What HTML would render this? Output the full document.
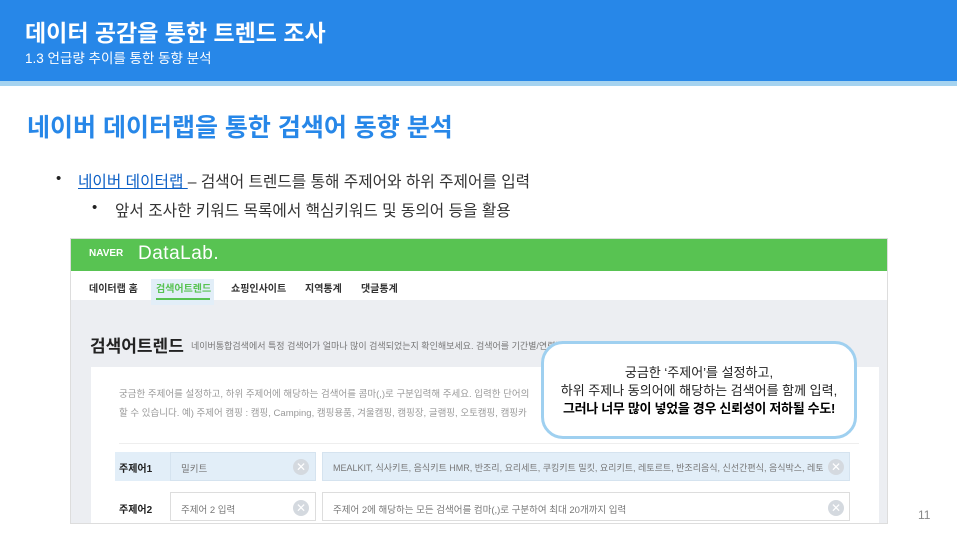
<!DOCTYPE html>
<html><head><meta charset="utf-8"><style>
*{margin:0;padding:0;box-sizing:border-box}
body{width:957px;height:534px;background:#fff;position:relative;overflow:hidden;font-family:"Liberation Sans","Noto Sans CJK KR",sans-serif}
.a{position:absolute;white-space:nowrap}
.x{position:absolute;width:16px;height:16px;border-radius:50%;background:#d4d9df;color:#fff;font-size:12px;line-height:16px;text-align:center}
</style></head><body>
<div class="a" style="left:0;top:0;width:957px;height:81px;background:#2787e8"></div>
<div class="a" style="left:0;top:81px;width:957px;height:5px;background:#a5d3f0"></div>
<div class="a" style="left:25px;top:14px;color:#fff;font-size:23px;font-weight:bold">데이터 공감을 통한 트렌드 조사</div>
<div class="a" style="left:25px;top:47px;color:#fff;font-size:13.5px">1.3 언급량 추이를 통한 동향 분석</div>
<div class="a" style="left:27px;top:108px;color:#2787e8;font-size:25px;font-weight:bold">네이버 데이터랩을 통한 검색어 동향 분석</div>
<div class="a" style="left:56px;top:170px;font-size:15px;color:#222">•</div>
<div class="a" style="left:78px;top:169px;font-size:15.7px;color:#333"><span style="color:#0b5fc6;text-decoration:underline">네이버 데이터랩 </span>– 검색어 트렌드를 통해 주제어와 하위 주제어를 입력</div>
<div class="a" style="left:92px;top:199px;font-size:15px;color:#222">•</div>
<div class="a" style="left:115px;top:198px;font-size:15.7px;color:#333">앞서 조사한 키워드 목록에서 핵심키워드 및 동의어 등을 활용</div>

<div class="a" style="left:70px;top:238px;width:818px;height:286px;background:#eceef2;border:1px solid #ddd;overflow:hidden">
 <div class="a" style="left:0;top:0;width:818px;height:32px;background:#58c352"></div>
 <div class="a" style="left:18px;top:9px;color:#fff;font-size:10px;font-weight:bold">NAVER</div>
 <div class="a" style="left:67px;top:4px;color:#fff;font-size:19px;font-weight:300;letter-spacing:0.5px">DataLab.</div>
 <div class="a" style="left:0;top:32px;width:818px;height:29px;background:#fff"></div>
 <div class="a" style="left:80px;top:40px;width:63px;height:26px;background:#e2eef8"></div>
 <div class="a" style="left:85px;top:59px;width:54px;height:2px;background:#58c352"></div>
 <div class="a" style="left:18px;top:41px;font-size:10px;font-weight:bold;color:#333">데이터랩 홈</div>
 <div class="a" style="left:85px;top:41px;font-size:10px;font-weight:bold;color:#58c352">검색어트렌드</div>
 <div class="a" style="left:160px;top:41px;font-size:10px;font-weight:bold;color:#333">쇼핑인사이트</div>
 <div class="a" style="left:234px;top:41px;font-size:10px;font-weight:bold;color:#333">지역통계</div>
 <div class="a" style="left:290px;top:41px;font-size:10px;font-weight:bold;color:#333">댓글통계</div>
 <div class="a" style="left:19px;top:93px;font-size:17px;font-weight:bold;color:#222">검색어트렌드</div>
 <div class="a" style="left:120px;top:100px;font-size:9px;color:#777">네이버통합검색에서 특정 검색어가 얼마나 많이 검색되었는지 확인해보세요. 검색어를 기간별/연령별/성별로 조회할 수 있습니다.</div>
 <div class="a" style="left:20px;top:128px;width:788px;height:160px;background:#fff"></div>
 <div class="a" style="left:48px;top:147px;font-size:9.5px;color:#999">궁금한 주제어를 설정하고, 하위 주제어에 해당하는 검색어를 콤마(,)로 구분입력해 주세요. 입력한 단어의</div>
 <div class="a" style="left:48px;top:166px;font-size:9.5px;color:#999">할 수 있습니다. 예) 주제어 캠핑 : 캠핑, Camping, 캠핑용품, 겨울캠핑, 캠핑장, 글램핑, 오토캠핑, 캠핑카</div>
 <div class="a" style="left:48px;top:204px;width:740px;height:1px;background:#eee"></div>
 <div class="a" style="left:44px;top:213px;width:56px;height:29px;background:#e2eef8"></div>
 <div class="a" style="left:99px;top:213px;width:146px;height:29px;background:#e2eef8;border:1px solid #d5e3ef"></div>
 <div class="a" style="left:251px;top:213px;width:528px;height:29px;background:#e2eef8;border:1px solid #d5e3ef"></div>
 <div class="a" style="left:48px;top:221px;font-size:10px;font-weight:bold;color:#222">주제어1</div>
 <div class="a" style="left:110px;top:222px;font-size:9.5px;color:#777">밀키트</div>
 <div class="x" style="left:222px;top:220px">✕</div>
 <div class="a" style="left:262px;top:222px;width:490px;overflow:hidden;font-size:9px;color:#777">MEALKIT, 식사키트, 음식키트 HMR, 반조리, 요리세트, 쿠킹키트 밀킷, 요리키트, 레토르트, 반조리음식, 신선간편식, 음식박스, 레토르식품, 레</div>
 <div class="x" style="left:757px;top:220px">✕</div>
 <div class="a" style="left:99px;top:253px;width:146px;height:29px;background:#fff;border:1px solid #ddd"></div>
 <div class="a" style="left:251px;top:253px;width:528px;height:29px;background:#fff;border:1px solid #ddd"></div>
 <div class="a" style="left:48px;top:262px;font-size:10px;font-weight:bold;color:#222">주제어2</div>
 <div class="a" style="left:110px;top:263px;font-size:9.5px;color:#777">주제어 2 입력</div>
 <div class="x" style="left:222px;top:261px">✕</div>
 <div class="a" style="left:262px;top:263px;font-size:9.5px;color:#777">주제어 2에 해당하는 모든 검색어를 컴마(,)로 구분하여 최대 20개까지 입력</div>
 <div class="x" style="left:757px;top:261px">✕</div>
</div>

<div class="a" style="left:541px;top:341px;width:316px;height:98px;background:#fff;border:3px solid #9fd0f0;border-radius:22px;text-align:center;padding-top:20px;font-size:13px;line-height:18px;color:#222">
궁금한 ‘주제어’를 설정하고,<br>하위 주제나 동의어에 해당하는 검색어를 함께 입력,<br><b style="color:#000;letter-spacing:-0.3px">그러나 너무 많이 넣었을 경우 신뢰성이 저하될 수도!</b></div>
<div class="a" style="left:918px;top:508px;font-size:12px;color:#888">11</div>
</body></html>
